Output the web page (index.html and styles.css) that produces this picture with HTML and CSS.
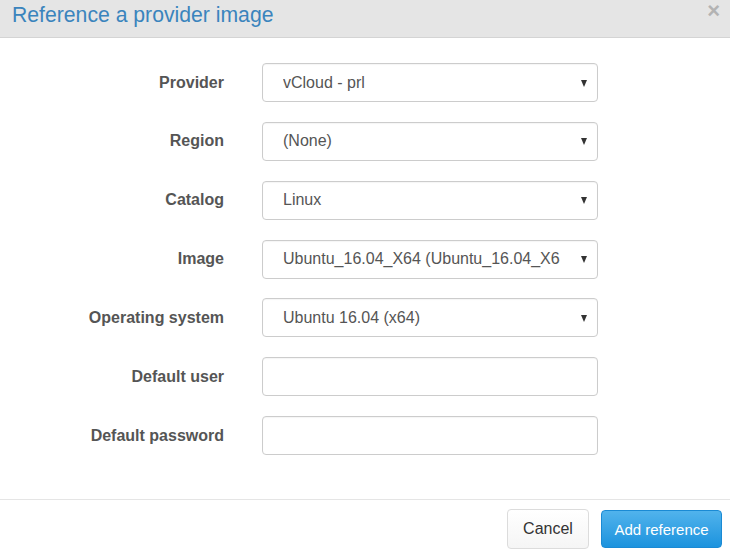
FILE: index.html
```html
<!DOCTYPE html>
<html>
<head>
<meta charset="utf-8">
<link rel="stylesheet" href="styles.css">
</head>
<body>
<div class="modal">
  <div class="modal-header">
    <h4 class="modal-title">Reference a provider image</h4>
    <span class="close">×</span>
  </div>
  <div class="modal-body">
    <div class="form-row">
      <label class="form-label">Provider</label>
      <div class="select"><span class="select-text">vCloud - prl</span><span class="caret"></span></div>
    </div>
    <div class="form-row">
      <label class="form-label">Region</label>
      <div class="select"><span class="select-text">(None)</span><span class="caret"></span></div>
    </div>
    <div class="form-row">
      <label class="form-label">Catalog</label>
      <div class="select"><span class="select-text">Linux</span><span class="caret"></span></div>
    </div>
    <div class="form-row">
      <label class="form-label">Image</label>
      <div class="select"><span class="select-text">Ubuntu_16.04_X64 (Ubuntu_16.04_X64)</span><span class="caret"></span></div>
    </div>
    <div class="form-row">
      <label class="form-label">Operating system</label>
      <div class="select"><span class="select-text">Ubuntu 16.04 (x64)</span><span class="caret"></span></div>
    </div>
    <div class="form-row">
      <label class="form-label">Default user</label>
      <div class="input"></div>
    </div>
    <div class="form-row">
      <label class="form-label">Default password</label>
      <div class="input"></div>
    </div>
  </div>
  <div class="modal-footer">
    <button class="btn btn-default">Cancel</button>
    <button class="btn btn-primary">Add reference</button>
  </div>
</div>
</body>
</html>
```
FILE: styles.css
```css
html, body {
  margin: 0;
  padding: 0;
  background: #fff;
  font-family: "Liberation Sans", Arial, sans-serif;
}
.modal {
  width: 730px;
  height: 559px;
  display: flex;
  flex-direction: column;
}
.modal-header {
  height: 37px;
  background: #e5e5e5;
  border-bottom: 1px solid #d4d4d4;
  display: flex;
  justify-content: space-between;
  align-items: flex-start;
  padding: 0 10px 0 12px;
}
.modal-title {
  margin: 3px 0 0 0;
  font-size: 21.2px;
  line-height: 24px;
  font-weight: normal;
  color: #3a84bd;
}
.close {
  font-size: 22px;
  font-weight: bold;
  line-height: 26px;
  color: #b3b3b3;
  margin-top: -2px;
}
.modal-body {
  padding-top: 25px;
  display: flex;
  flex-direction: column;
  gap: 19.85px;
  height: 418px;
  box-sizing: border-box;
}
.form-row {
  display: grid;
  grid-template-columns: 224px 336px;
  column-gap: 38px;
  align-items: center;
}
.form-label {
  text-align: right;
  font-weight: bold;
  font-size: 16px;
  color: #555;
}
.select, .input {
  height: 39px;
  box-sizing: border-box;
  border: 1px solid #ccc;
  border-radius: 4px;
  background: #fff;
  box-shadow: inset 0 1px 1px rgba(0,0,0,0.04);
}
.select {
  display: flex;
  align-items: center;
  padding: 0 10px 0 20px;
  font-size: 16px;
  color: #555;
}
.select-text {
  flex: 1;
  white-space: nowrap;
  overflow: hidden;
  margin-right: 21px;
}
.caret {
  width: 0;
  height: 0;
  border-left: 3.5px solid transparent;
  border-right: 3.5px solid transparent;
  border-top: 7px solid #333;
  margin-top: 1px;
}
.modal-footer {
  margin-top: 43px;
  border-top: 1px solid #e5e5e5;
  display: flex;
  justify-content: flex-end;
  align-items: flex-end;
  gap: 12px;
  padding: 9px 8px 0 0;
  height: 40px;
}
.btn {
  font-family: "Liberation Sans", Arial, sans-serif;
  border-radius: 4px;
  cursor: pointer;
}
.btn-default {
  width: 82px;
  height: 40px;
  background: linear-gradient(#fff, #f5f5f5);
  border: 1px solid #dcdcdc;
  color: #333;
  font-size: 16px;
}
.btn-primary {
  width: 121px;
  height: 38px;
  border: 1px solid #1a8ad4;
  background: linear-gradient(#51b3ec, #1c93de);
  color: #fff;
  font-size: 15px;
  margin-bottom: 1px;
}
```
